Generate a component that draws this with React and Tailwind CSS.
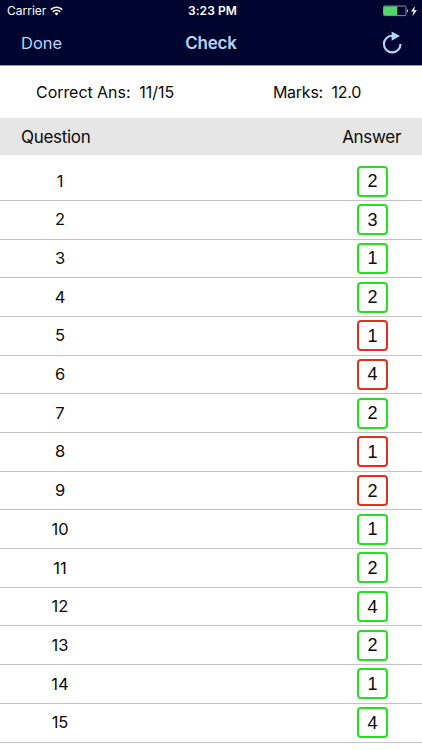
import React from 'react';

const answers = [
    { question: 1, answer: 2, correct: true },
    { question: 2, answer: 3, correct: true },
    { question: 3, answer: 1, correct: true },
    { question: 4, answer: 2, correct: true },
    { question: 5, answer: 1, correct: false },
    { question: 6, answer: 4, correct: false },
    { question: 7, answer: 2, correct: true },
    { question: 8, answer: 1, correct: false },
    { question: 9, answer: 2, correct: false },
    { question: 10, answer: 1, correct: true },
    { question: 11, answer: 2, correct: true },
    { question: 12, answer: 4, correct: true },
    { question: 13, answer: 2, correct: true },
    { question: 14, answer: 1, correct: true },
    { question: 15, answer: 4, correct: true },
];

const WifiIcon = () => (
    <svg className="ml-[4px] w-[13px] h-[10px]" viewBox="0 0 13 10" fill="none" stroke="white" strokeWidth="1.7">
        <path d="M0.8 3.6a8.1 8.1 0 0 1 11.4 0" />
        <path d="M2.8 5.8a5.2 5.2 0 0 1 7.4 0" />
        <path d="M6.5 9.5 4.6 7.5a2.7 2.7 0 0 1 3.8 0z" fill="white" stroke="none" />
    </svg>
);

const BatteryIcon = () => (
    <svg className="w-[36px] h-[12px]" viewBox="0 0 36 12">
        <rect x="0.5" y="1" width="22.5" height="9.6" rx="1.2" fill="none" stroke="#9094a8" />
        <rect x="1" y="1.5" width="13.3" height="8.6" fill="#53d769" />
        <path d="M24 4.2c1.6.4 1.6 2.8 0 3.2z" fill="#c4c6d2" />
        <path d="M31.8 1 28.2 6.5h2.4L29.4 11.2l4.5-6h-2.7z" fill="white" />
    </svg>
);

const RefreshIcon = () => (
    <svg className="w-[20px] h-[24px]" viewBox="0 0 20 24">
        <path d="M10.2 4.8A8.3 8.3 0 1 0 18.5 13.1" fill="none" stroke="#b5d5fb" strokeWidth="2.1" />
        <path d="M9.6 0.4v9.4L18 4.9z" fill="#b5d5fb" />
    </svg>
);

const Header = () => (
    <header className="h-[66px] bg-[#00052f] border-b border-[#9c9bb5]">
        <div className="grid grid-cols-3 items-center h-[22px] text-white text-[12px]">
            <div className="flex items-center pl-[7px]">
                <span>Carrier</span>
                <WifiIcon />
            </div>
            <span className="text-center font-semibold tracking-[0.1px] pl-[3px]">3:23 PM</span>
            <div className="flex justify-end pr-[3px]">
                <BatteryIcon />
            </div>
        </div>
        <div className="grid grid-cols-3 items-center h-[42px] text-[#b5d5fb]">
            <button className="text-left pl-[21px] text-[16.5px]">Done</button>
            <h1 className="text-center font-semibold text-[17px] tracking-[-0.2px] pt-[2px]">Check</h1>
            <button className="flex justify-end pr-[20px]">
                <RefreshIcon />
            </button>
        </div>
    </header>
);

const Result = ({ question, answer, correct }) => (
    <li className="flex items-center justify-between h-[38.7px] border-b border-[#c3c3c6] pr-[34px]">
        <span className="w-[120px] text-center text-[16.5px]">{question}</span>
        <span className={`flex items-center justify-center w-[31px] h-[31px] rounded-[4px] border-2 pt-px text-[18px] font-['Liberation_Sans',sans-serif] ${correct ? 'border-[#24e01f]' : 'border-[#e2301f]'}`}>
            {answer}
        </span>
    </li>
);

const App = () => {
    return (
        <div className="w-full h-[750px] overflow-hidden bg-white text-[#0a0a0a] font-['Inter',sans-serif]">
            <Header />

            <div className="flex justify-between items-center h-[52px] pl-[36px] pr-[61px] text-[16px]">
                <span className="whitespace-pre tracking-[-0.05px]">Correct Ans:  11/15</span>
                <span className="whitespace-pre tracking-[-0.25px]">Marks:  12.0</span>
            </div>

            <div className="flex justify-between items-center h-[37px] pt-[2px] px-[21px] bg-[#e6e6e6] text-[17px] tracking-[-0.3px]">
                <span>Question</span>
                <span>Answer</span>
            </div>

            <ul className="pt-[7.2px]">
                {answers.map((item) => (
                    <Result key={item.question} {...item} />
                ))}
            </ul>
        </div>
    );
};

export default App;
